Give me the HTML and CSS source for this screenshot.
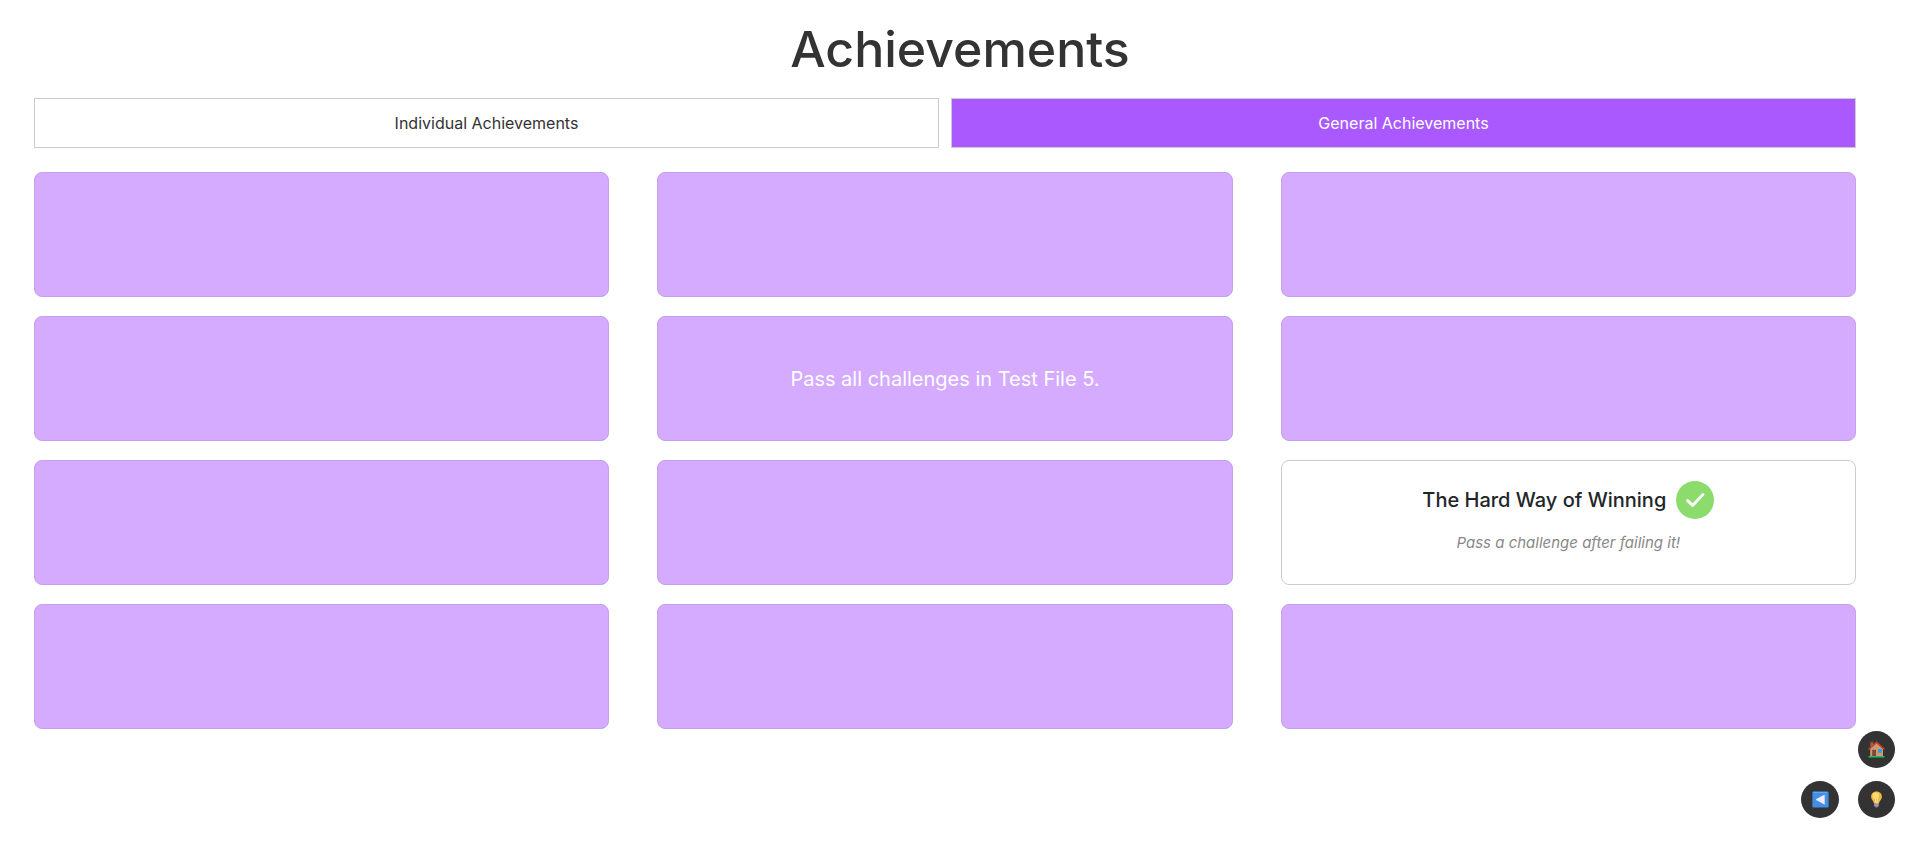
FILE: index.html
```html
<!DOCTYPE html>
<html lang="en">
<head>
<meta charset="utf-8">
<meta name="viewport" content="width=device-width, initial-scale=1">
<title>Achievements</title>
<link rel="stylesheet" href="styles.css">
</head>
<body>
<h1 class="title">Achievements</h1>
<main class="content">
  <nav class="tabs">
    <button class="tab" type="button">Individual Achievements</button>
    <button class="tab tab-active" type="button">General Achievements</button>
  </nav>
  <section class="grid">
    <article class="card"></article>
    <article class="card"></article>
    <article class="card"></article>
    <article class="card"></article>
    <article class="card"><p class="hint">Pass all challenges in Test File 5.</p></article>
    <article class="card"></article>
    <article class="card"></article>
    <article class="card"></article>
    <article class="card card-done">
      <div class="card-head">
        <h2 class="card-title">The Hard Way of Winning</h2>
        <svg class="check" viewBox="0 0 38 38" aria-hidden="true"><circle cx="19" cy="19" r="19" fill="#8bdc6d"/><path d="M11.6 19.6l5 4.8L27 13.6" fill="none" stroke="#fff" stroke-width="2.9" stroke-linecap="round" stroke-linejoin="round"/></svg>
      </div>
      <p class="card-text">Pass a challenge after failing it!</p>
    </article>
    <article class="card"></article>
    <article class="card"></article>
    <article class="card"></article>
  </section>
</main>
<div class="floating">
  <button class="round home" type="button" aria-label="Home">
    <svg class="icon" viewBox="0 0 17 17" aria-hidden="true">
      <rect x="2.4" y="1" width="2.8" height="6" fill="#a65f48"/><rect x="2" y=".6" width="3.6" height="1.2" fill="#75483e"/>
      <path d="M2.2 8L8.6 2.2 15 8v7.4H2.2z" fill="#cf9a6e"/>
      <path d="M1 8L8.6 1.2l7.4 6.8" fill="none" stroke="#df4032" stroke-width="1.3" stroke-linecap="round" stroke-linejoin="round"/>
      <rect x="4.2" y="8.8" width="3.8" height="6.2" fill="#7b483d"/><rect x="10" y="8" width="3.8" height="3.8" fill="#3399e8"/>
      <rect x=".4" y="15" width="16.2" height="1.4" rx=".6" fill="#20bd62"/>
    </svg>
  </button>
  <button class="round back" type="button" aria-label="Back">
    <svg class="icon" viewBox="0 0 17 17" aria-hidden="true"><rect x=".4" y=".4" width="16.2" height="16.2" rx="1.3" fill="#4290e5"/><path d="M1.5 1.4h13.6" stroke="#67b0f5" stroke-width=".9"/><path d="M12.4 4v9.2L4 8.6z" fill="#f3e9ff" stroke="#f3e9ff" stroke-width=".6" stroke-linejoin="round"/></svg>
  </button>
  <button class="round" type="button" aria-label="Hint">
    <svg class="icon" viewBox="0 0 17 17" aria-hidden="true"><path d="M8.5.5C5 .5 3.1 2.9 3.1 5.7c0 2.8 2.5 4 3.2 7.3h4.4c.7-3.3 3.2-4.5 3.2-7.3C13.9 2.9 12 .5 8.5.5z" fill="#efb744"/><ellipse cx="7.8" cy="4.7" rx="3.2" ry="3.2" fill="#ffdc6a"/><path d="M7.2 7.4l.8 5.2M9.8 7.4L9 12.6" stroke="#fff0bd" stroke-width=".8"/><path d="M6.2 12.5h4.6v2.6l-1.3 1.4h-2l-1.3-1.4z" fill="#8c789f"/><path d="M6.4 14.1h4.2" stroke="#cdbbd5" stroke-width=".8"/></svg>
  </button>
</div>
</body>
</html>
```
FILE: styles.css
```css
* {
  box-sizing: border-box;
}

body {
  margin: 0;
  background: #fff;
  color: #212529;
  font-family: Inter, "Liberation Sans", sans-serif;
  font-size: 16px;
}

.title {
  margin: 0;
  padding: 19px 0;
  color: #333;
  font-size: 50px;
  font-weight: 500;
  line-height: 60px;
  text-align: center;
}

.content {
  padding: 0 64px 24px 34px;
}

.tabs {
  display: flex;
  gap: 12px;
  margin-bottom: 24px;
}

.tab {
  flex: 1;
  height: 50px;
  border: 1px solid #ccc;
  background: #fff;
  color: #333;
  font: inherit;
  cursor: pointer;
}

.tab-active {
  background: #a959ff;
  color: #fff;
}

.grid {
  display: grid;
  grid-template-columns: repeat(3, 1fr);
  gap: 19px 48px;
}

.card {
  display: flex;
  flex-direction: column;
  align-items: center;
  justify-content: center;
  min-height: 125px;
  border: 1px solid #c5a1ec;
  border-radius: 8px;
  background: #d4abff;
}

.hint {
  margin: 0;
  color: #fff;
  font-size: 20px;
}

.card-done {
  justify-content: flex-start;
  gap: 12px;
  padding-top: 20px;
  border-color: #ccc;
  background: #fff;
}

.card-head {
  display: flex;
  align-items: center;
  gap: 10px;
}

.card-title {
  margin: 0;
  font-size: 20px;
  font-weight: 500;
  line-height: 24px;
}

.check {
  width: 38px;
  height: 38px;
}

.card-text {
  margin: 0;
  color: #888;
  font-size: 15px;
  font-style: italic;
  line-height: 24px;
}

.floating {
  position: fixed;
  right: 25px;
  bottom: 24px;
  display: grid;
  grid-template-columns: 38px 37px;
  gap: 13px 19px;
}

.round {
  display: flex;
  align-items: center;
  justify-content: center;
  height: 37px;
  padding: 0;
  border: 0;
  border-radius: 50%;
  background: #333;
  cursor: pointer;
}

.home {
  grid-column: 2;
}

.icon {
  width: 17px;
  height: 17px;
}
```
